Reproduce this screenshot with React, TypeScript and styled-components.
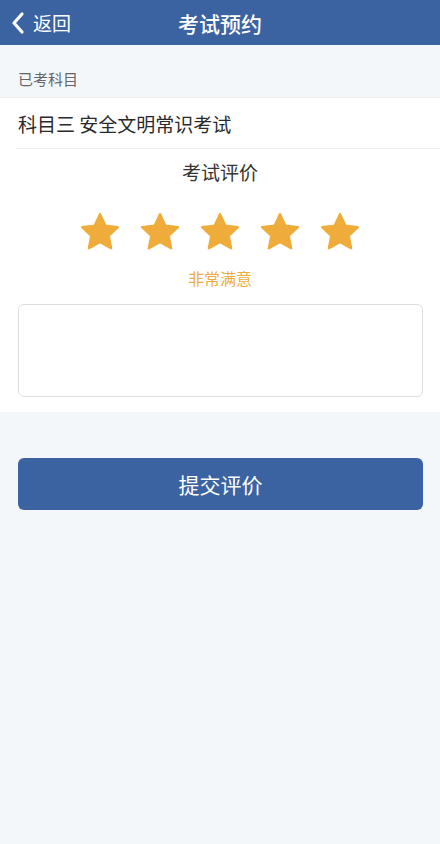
import React, { useState } from 'react';
import styled, { createGlobalStyle } from 'styled-components';

const GlobalStyle = createGlobalStyle`
  html, body {
    margin: 0;
    padding: 0;
    background: #f4f7f9;
    font-family: "Noto Sans CJK SC", "Noto Sans", sans-serif;
  }
`;

const Page = styled.div`
  width: 440px;
  min-height: 844px;
  background: #f4f7f9;
  display: flex;
  flex-direction: column;
`;

const Header = styled.div`
  height: 45px;
  background: #3b62a1;
  display: flex;
  align-items: center;
  position: relative;
  color: #fff;
`;

const BackButton = styled.div`
  display: flex;
  align-items: center;
  padding-left: 10px;
  gap: 7px;
  font-size: 19px;
  z-index: 1;
`;

const HeaderTitle = styled.div`
  position: absolute;
  left: 0;
  right: 0;
  text-align: center;
  font-size: 21px;
  font-weight: 500;
`;

const SectionLabel = styled.div`
  padding: 24px 18px 8px;
  font-size: 15px;
  color: #666;
  line-height: 20px;
`;

const Card = styled.div`
  background: #fff;
  border-top: 1px solid #eceef0;
  display: flex;
  flex-direction: column;
  padding-bottom: 15px;
`;

const SubjectRow = styled.div`
  margin-left: 16px;
  padding: 0 2px;
  height: 50px;
  display: flex;
  align-items: center;
  font-size: 19px;
  color: #2a2a2a;
  border-bottom: 1px solid #eceef0;
`;

const RateTitle = styled.div`
  text-align: center;
  font-size: 19px;
  color: #333;
  margin-top: 10px;
  line-height: 26px;
`;

const StarRow = styled.div`
  display: flex;
  justify-content: center;
  gap: 18px;
  margin-top: 26px;
`;

const StarBtn = styled.div`
  width: 42px;
  height: 42px;
  cursor: pointer;
`;

const RateText = styled.div`
  text-align: center;
  color: #eeac3c;
  font-size: 16px;
  margin-top: 15px;
  line-height: 20px;
`;

const Comment = styled.textarea`
  margin: 16px 17px 0 18px;
  height: 93px;
  box-sizing: border-box;
  border: 1px solid #dedede;
  border-radius: 6px;
  resize: none;
  outline: none;
  padding: 8px;
  font-family: inherit;
  font-size: 14px;
`;

const SubmitButton = styled.button`
  margin: 46px 17px 0 18px;
  height: 52px;
  border: none;
  border-radius: 6px;
  background: #3b62a1;
  color: #fff;
  font-size: 21px;
  font-family: inherit;
  cursor: pointer;
`;

const labels = ['非常不满意', '不满意', '一般', '满意', '非常满意'];

const Star: React.FC<{ on: boolean }> = ({ on }) => (
  <svg width="42" height="42" viewBox="0 0 24 24">
    <path
      d="M12 1.8l3.05 6.6 7.15.85-5.3 4.9 1.45 7.1L12 17.7l-6.35 3.55 1.45-7.1-5.3-4.9 7.15-.85z"
      fill={on ? '#efac3a' : '#e3e3e3'}
      stroke={on ? '#efac3a' : '#e3e3e3'}
      strokeWidth="1.4"
      strokeLinejoin="round"
    />
  </svg>
);

const App: React.FC = () => {
  const [score, setScore] = useState(5);

  return (
    <Page>
      <GlobalStyle />
      <Header>
        <BackButton>
          <svg width="16" height="24" viewBox="0 0 16 24">
            <path d="M12 3L4 12l8 9" fill="none" stroke="#fff" strokeWidth="3.2" strokeLinecap="round" strokeLinejoin="round" />
          </svg>
          返回
        </BackButton>
        <HeaderTitle>考试预约</HeaderTitle>
      </Header>
      <SectionLabel>已考科目</SectionLabel>
      <Card>
        <SubjectRow>科目三 安全文明常识考试</SubjectRow>
        <RateTitle>考试评价</RateTitle>
        <StarRow>
          {[1, 2, 3, 4, 5].map(n => (
            <StarBtn key={n} onClick={() => setScore(n)}>
              <Star on={n <= score} />
            </StarBtn>
          ))}
        </StarRow>
        <RateText>{labels[score - 1]}</RateText>
        <Comment />
      </Card>
      <SubmitButton>提交评价</SubmitButton>
    </Page>
  );
};

export default App;
